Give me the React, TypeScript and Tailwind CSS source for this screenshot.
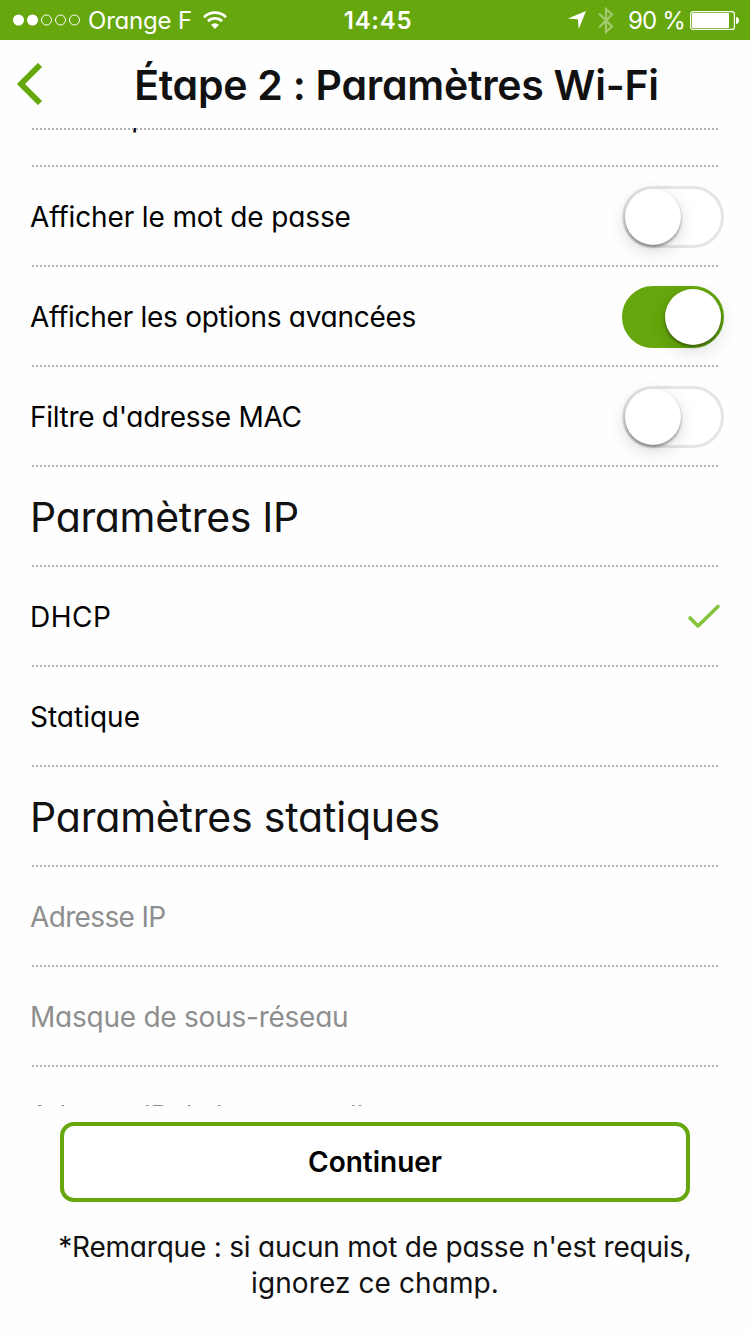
import type { ReactNode } from 'react';

/* ─── Shared styles ──────────────────────────────────────────────────── */
const DOTS =
  'h-[2px] shrink-0 bg-[repeating-linear-gradient(90deg,#b3b3b3_0_2px,transparent_2px_4px)]';

/* ─── Status bar ─────────────────────────────────────────────────────── */
function StatusBar() {
  return (
    <div className="grid h-10 shrink-0 grid-cols-3 items-center bg-[#65a70c] text-[24px] leading-10 text-white">
      <div className="flex items-center pl-[13px]">
        <svg className="h-3 w-[68px]" viewBox="0 0 68 12" fill="none" stroke="white">
          <circle cx="5.5" cy="6" r="5.5" fill="white" stroke="none" />
          <circle cx="19.5" cy="6" r="5.5" fill="white" stroke="none" />
          <circle cx="33.5" cy="6" r="5" />
          <circle cx="47.5" cy="6" r="5" />
          <circle cx="61.5" cy="6" r="5" />
        </svg>
        <span className="ml-[7px] h-10 w-[115px] pt-px tracking-[-0.2px] whitespace-nowrap">
          Orange F
        </span>
        <svg className="h-[18px] w-6" viewBox="0 0 24 18" fill="none" stroke="white" strokeWidth="2.9">
          <path d="M1 6.2a15.6 15.6 0 0 1 22 0" />
          <path d="M5 10.2a10 10 0 0 1 14 0" />
          <path d="M12 18l-4-4.2a5.8 5.8 0 0 1 8 0z" fill="white" stroke="none" />
        </svg>
      </div>
      <span className="h-10 pt-px pl-[6px] text-center font-semibold tracking-[0.7px]">14:45</span>
      <div className="flex items-center justify-end pr-[11px]">
        <svg className="h-[18px] w-[18px]" viewBox="0 0 18 18" fill="white">
          <path d="M18 0L10.8 18L9.8 8.2L0 7.4z" />
        </svg>
        <svg
          className="ml-3 h-[27px] w-4 opacity-40"
          viewBox="0 0 16 27"
          fill="none"
          stroke="white"
          strokeWidth="2.2"
        >
          <path d="M1 6.5L14 19.5L8 25V2L14 7.5L1 20.5" />
        </svg>
        <span className="ml-[14px] h-10 w-[62px] pt-px tracking-[-0.8px] whitespace-nowrap">90 %</span>
        <svg className="h-[19px] w-[49px]" viewBox="0 0 49 19" fill="none">
          <rect x="0.6" y="0.6" width="43.8" height="17.8" rx="2.5" stroke="white" strokeWidth="1.2" />
          <rect x="2" y="2" width="37" height="15" rx="1" fill="white" />
          <path d="M46 6c2 0 3 1.5 3 3.5s-1 3.5-3 3.5z" fill="white" />
        </svg>
      </div>
    </div>
  );
}

/* ─── Switch ─────────────────────────────────────────────────────────── */
function Switch({ on = false }: { on?: boolean }) {
  return (
    <span
      role="switch"
      aria-checked={on}
      className={`flex h-[62px] w-[102px] rounded-full border-[3px] ${
        on ? 'justify-end border-[#65a70c] bg-[#65a70c]' : 'border-[#e5e5e5] bg-white'
      }`}
    >
      <span className="h-14 w-14 rounded-full bg-white shadow-[0_2px_3px_rgba(0,0,0,0.4),0_6px_18px_rgba(0,0,0,0.14)]" />
    </span>
  );
}

/* ─── List row ───────────────────────────────────────────────────────── */
interface RowProps {
  children: ReactNode;
  className?: string;
  right?: ReactNode;
}

function Row({ children, className = '', right }: RowProps) {
  return (
    <div className="flex h-[100px] shrink-0 flex-col">
      <div className="flex flex-1 items-center justify-between pt-[2px] pr-[26px] pl-[30px]">
        <span className={`whitespace-nowrap ${className}`}>{children}</span>
        {right}
      </div>
      <div className={`mr-8 ml-8 ${DOTS}`} />
    </div>
  );
}

export default function App() {
  return (
    <main
      className="flex h-[1334px] w-[750px] flex-col overflow-hidden bg-[#fefefe] font-['Inter',sans-serif] text-[28px] text-black [font-feature-settings:'cv11']"
    >
      <StatusBar />

      {/* header */}
      <header className="flex h-[88px] shrink-0 items-center">
        <svg className="ml-4 h-[42px] w-[27px]" viewBox="16 63 27 42" fill="none" stroke="#65a70c" strokeWidth="5.8">
          <path d="M40 65L21 84L40 103" />
        </svg>
        <h1 className="mt-px flex-1 text-center text-[41px] leading-[50px] font-semibold tracking-[-0.25px] whitespace-nowrap text-[#111]">
          Étape 2 : Paramètres Wi-Fi
        </h1>
      </header>

      {/* scrolled settings list */}
      <section className="relative h-[978px] shrink-0 overflow-hidden">
        <div className={`absolute top-0 right-8 left-8 ${DOTS}`} />
        <div className="-mt-[61px] flex flex-col">
          <Row className="tracking-[0.1px]">Mot de passe</Row>
          <Row className="tracking-[-0.13px]" right={<Switch />}>
            Afficher le mot de passe
          </Row>
          <Row className="tracking-[-0.28px]" right={<Switch on />}>
            Afficher les options avancées
          </Row>
          <Row className="tracking-[-0.3px]" right={<Switch />}>
            Filtre d'adresse MAC
          </Row>
          <Row className="mt-[2px] text-[41px] tracking-[-0.33px] text-[#111]">Paramètres IP</Row>
          <Row
            className="tracking-[0.5px]"
            right={
              <svg
                className="mr-0.5 h-7 w-9"
                viewBox="686 603 36 28"
                fill="none"
                stroke="#83c43c"
                strokeWidth="3.6"
                strokeLinecap="round"
                strokeLinejoin="round"
              >
                <path d="M690 618L698 626L718 606.5" />
              </svg>
            }
          >
            DHCP
          </Row>
          <Row>Statique</Row>
          <Row className="mt-[2px] text-[41px] tracking-[-0.2px] text-[#111]">Paramètres statiques</Row>
          <Row className="tracking-[-0.65px] text-[#8e8e8e]">Adresse IP</Row>
          <Row className="tracking-[-0.24px] text-[#8e8e8e]">Masque de sous-réseau</Row>
          <Row className="pb-[2px] tracking-[-0.4px] text-[#8e8e8e]">Adresse IP de la passerelle</Row>
        </div>
      </section>

      {/* footer */}
      <footer className="flex flex-col items-center pt-4">
        <button className="h-20 w-[630px] rounded-[14px] border-4 border-[#65a70c] bg-white font-semibold">
          Continuer
        </button>
        <p className="mt-[27px] text-center leading-9 whitespace-nowrap text-[#111]">
          <span className="tracking-[-0.22px]">*Remarque : si aucun mot de passe n'est requis,</span>
          <br />
          <span className="tracking-[0.1px]">ignorez ce champ.</span>
        </p>
      </footer>
    </main>
  );
}
